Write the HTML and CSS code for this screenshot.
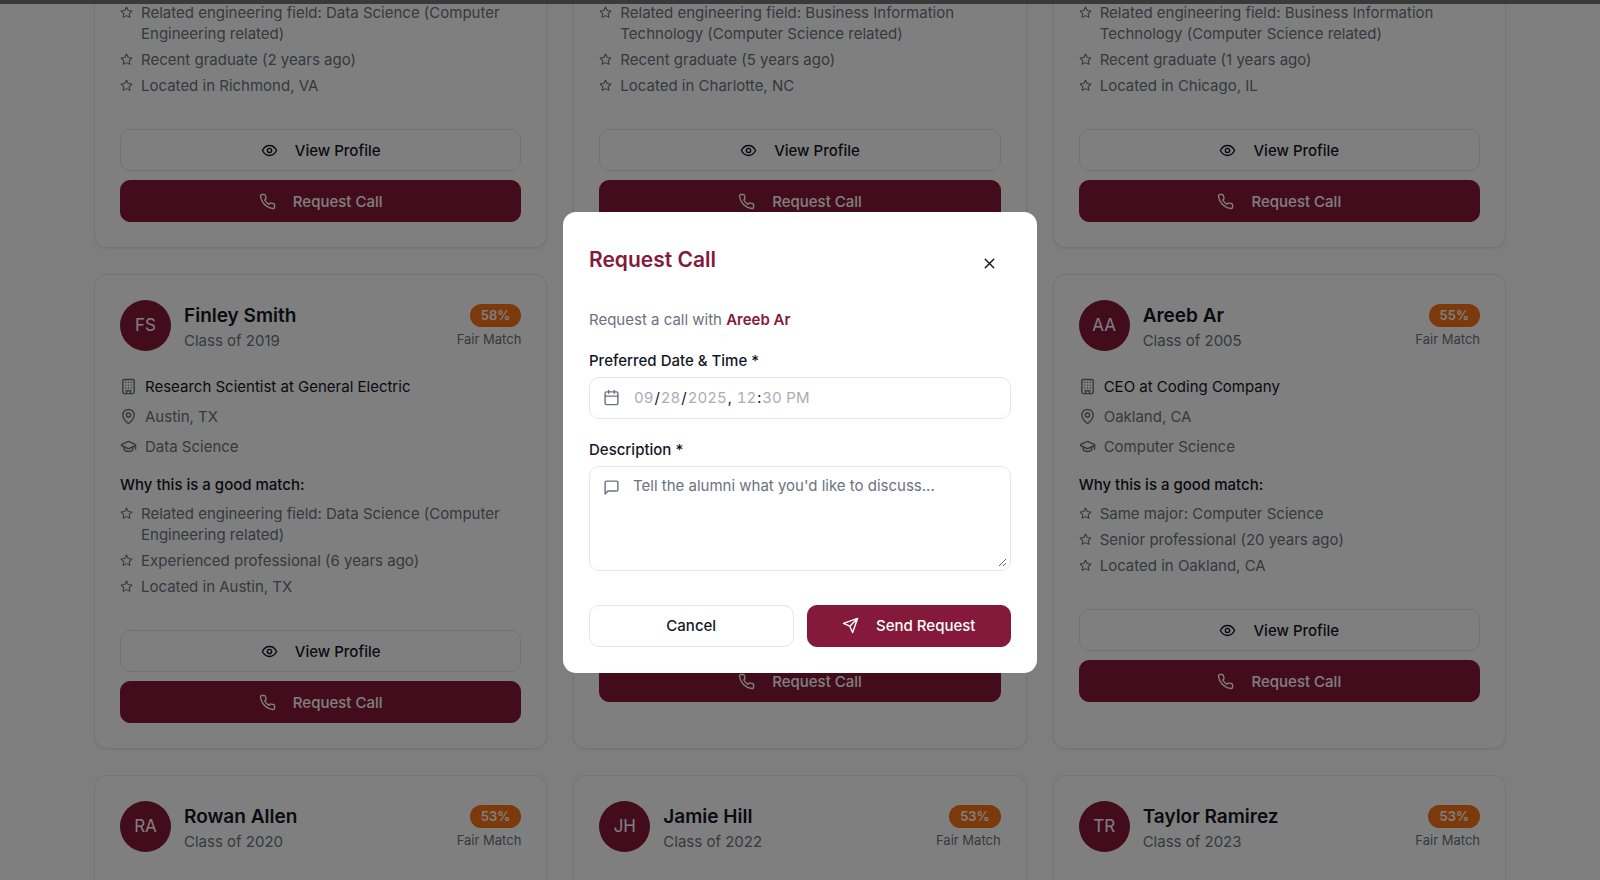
FILE: index.html
```
<!DOCTYPE html>
<html lang="en">

<head>
    <meta charset="UTF-8">
    <meta name="viewport" content="width=device-width, initial-scale=1.0">
    <title>Alumni Matches</title>
    <link rel="stylesheet" href="styles.css">
</head>

<body>
    <!-- icon set -->
    <svg class="sprite" aria-hidden="true">
        <symbol id="star" viewBox="0 0 24 24">
            <path d="M12 2l3.1 6.3 6.9 1-5 4.9 1.2 6.8-6.2-3.2L5.800 21 7 14.200 2 9.300l6.900-1z" />
        </symbol>
        <symbol id="eye" viewBox="0 0 24 24">
            <path d="M2 12s3.500-7 10-7 10 7 10 7-3.500 7-10 7-10-7-10-7z" />
            <circle cx="12" cy="12" r="3" />
        </symbol>
        <symbol id="phone" viewBox="0 0 24 24">
            <path d="M22 16.920v3a2 2 0 0 1-2.180 2 19.790 19.790 0 0 1-8.630-3.070 19.500 19.500 0 0 1-6-6 19.790 19.790 0 0 1-3.070-8.670A2 2 0 0 1 4.110 2h3a2 2 0 0 1 2 1.720 12.840 12.840 0 0 0 .7 2.810 2 2 0 0 1-.45 2.110L8.090 9.910a16 16 0 0 0 6 6l1.270-1.270a2 2 0 0 1 2.110-.45 12.840 12.840 0 0 0 2.810.7A2 2 0 0 1 22 16.920z" />
        </symbol>
        <symbol id="building" viewBox="0 0 24 24">
            <rect x="4" y="2" width="16" height="20" rx="2" />
            <path d="M9 22v-4h6v4M8 6h.01M16 6h.01M12 6h.01M12 10h.01M12 14h.01M16 10h.01M16 14h.01M8 10h.01M8 14h.01" />
        </symbol>
        <symbol id="pin" viewBox="0 0 24 24">
            <path d="M20 10c0 6-8 12-8 12s-8-6-8-12a8 8 0 0 1 16 0z" />
            <circle cx="12" cy="10" r="3" />
        </symbol>
        <symbol id="cap" viewBox="0 0 24 24">
            <path d="M21.420 10.920a1 1 0 0 0-.02-1.840L12.830 5.180a2 2 0 0 0-1.660 0L2.600 9.080a1 1 0 0 0 0 1.830l8.570 3.910a2 2 0 0 0 1.660 0z" />
            <path d="M22 10v6M6 12.500V16a6 3 0 0 0 12 0v-3.500" />
        </symbol>
        <symbol id="calendar" viewBox="0 0 24 24">
            <rect x="3" y="4" width="18" height="18" rx="2" />
            <path d="M16 2v4M8 2v4M3 10h18" />
        </symbol>
        <symbol id="message" viewBox="0 0 24 24">
            <path d="M21 15a2 2 0 0 1-2 2H7l-4 4V5a2 2 0 0 1 2-2h14a2 2 0 0 1 2 2z" />
        </symbol>
        <symbol id="send" viewBox="0 0 24 24">
            <path d="M22 2L15 22l-4-9-9-4zM22 2L11 13" />
        </symbol>
        <symbol id="close" viewBox="0 0 24 24">
            <path d="M18 6L6 18M6 6l12 12" />
        </symbol>
    </svg>

    <div class="topbar"></div>

    <main class="cards">
        <article class="card card-scrolled">
            <ul class="reasons">
                <li><svg class="icon icon-sm"><use href="#star" /></svg><span>Related engineering field: Data Science (Computer Engineering related)</span></li>
                <li><svg class="icon icon-sm"><use href="#star" /></svg><span>Recent graduate (2 years ago)</span></li>
                <li><svg class="icon icon-sm"><use href="#star" /></svg><span>Located in Richmond, VA</span></li>
            </ul>
            <div class="actions">
                <button class="btn btn-outline"><svg class="icon"><use href="#eye" /></svg>View Profile</button>
                <button class="btn btn-primary"><svg class="icon"><use href="#phone" /></svg>Request Call</button>
            </div>
        </article>
        <article class="card card-scrolled">
            <ul class="reasons">
                <li><svg class="icon icon-sm"><use href="#star" /></svg><span>Related engineering field: Business Information Technology (Computer Science related)</span></li>
                <li><svg class="icon icon-sm"><use href="#star" /></svg><span>Recent graduate (5 years ago)</span></li>
                <li><svg class="icon icon-sm"><use href="#star" /></svg><span>Located in Charlotte, NC</span></li>
            </ul>
            <div class="actions">
                <button class="btn btn-outline"><svg class="icon"><use href="#eye" /></svg>View Profile</button>
                <button class="btn btn-primary"><svg class="icon"><use href="#phone" /></svg>Request Call</button>
            </div>
        </article>
        <article class="card card-scrolled">
            <ul class="reasons">
                <li><svg class="icon icon-sm"><use href="#star" /></svg><span>Related engineering field: Business Information Technology (Computer Science related)</span></li>
                <li><svg class="icon icon-sm"><use href="#star" /></svg><span>Recent graduate (1 years ago)</span></li>
                <li><svg class="icon icon-sm"><use href="#star" /></svg><span>Located in Chicago, IL</span></li>
            </ul>
            <div class="actions">
                <button class="btn btn-outline"><svg class="icon"><use href="#eye" /></svg>View Profile</button>
                <button class="btn btn-primary"><svg class="icon"><use href="#phone" /></svg>Request Call</button>
            </div>
        </article>

        <article class="card">
            <header class="card-header">
                <div class="avatar">FS</div>
                <div class="person">
                    <h3>Finley Smith</h3>
                    <p>Class of 2019</p>
                </div>
                <div class="score">
                    <span class="badge">58%</span>
                    <span class="match">Fair Match</span>
                </div>
            </header>
            <ul class="details">
                <li class="job"><svg class="icon"><use href="#building" /></svg>Research Scientist at General Electric</li>
                <li><svg class="icon"><use href="#pin" /></svg>Austin, TX</li>
                <li><svg class="icon"><use href="#cap" /></svg>Data Science</li>
            </ul>
            <h4>Why this is a good match:</h4>
            <ul class="reasons">
                <li><svg class="icon icon-sm"><use href="#star" /></svg><span>Related engineering field: Data Science (Computer Engineering related)</span></li>
                <li><svg class="icon icon-sm"><use href="#star" /></svg><span>Experienced professional (6 years ago)</span></li>
                <li><svg class="icon icon-sm"><use href="#star" /></svg><span>Located in Austin, TX</span></li>
            </ul>
            <div class="actions">
                <button class="btn btn-outline"><svg class="icon"><use href="#eye" /></svg>View Profile</button>
                <button class="btn btn-primary"><svg class="icon"><use href="#phone" /></svg>Request Call</button>
            </div>
        </article>
        <article class="card card-behind">
            <div class="actions">
                <button class="btn btn-primary"><svg class="icon"><use href="#phone" /></svg>Request Call</button>
            </div>
        </article>
        <article class="card">
            <header class="card-header">
                <div class="avatar">AA</div>
                <div class="person">
                    <h3>Areeb Ar</h3>
                    <p>Class of 2005</p>
                </div>
                <div class="score">
                    <span class="badge">55%</span>
                    <span class="match">Fair Match</span>
                </div>
            </header>
            <ul class="details">
                <li class="job"><svg class="icon"><use href="#building" /></svg>CEO at Coding Company</li>
                <li><svg class="icon"><use href="#pin" /></svg>Oakland, CA</li>
                <li><svg class="icon"><use href="#cap" /></svg>Computer Science</li>
            </ul>
            <h4>Why this is a good match:</h4>
            <ul class="reasons">
                <li><svg class="icon icon-sm"><use href="#star" /></svg><span>Same major: Computer Science</span></li>
                <li><svg class="icon icon-sm"><use href="#star" /></svg><span>Senior professional (20 years ago)</span></li>
                <li><svg class="icon icon-sm"><use href="#star" /></svg><span>Located in Oakland, CA</span></li>
            </ul>
            <div class="actions">
                <button class="btn btn-outline"><svg class="icon"><use href="#eye" /></svg>View Profile</button>
                <button class="btn btn-primary"><svg class="icon"><use href="#phone" /></svg>Request Call</button>
            </div>
        </article>

        <article class="card card-last">
            <header class="card-header">
                <div class="avatar">RA</div>
                <div class="person">
                    <h3>Rowan Allen</h3>
                    <p>Class of 2020</p>
                </div>
                <div class="score">
                    <span class="badge">53%</span>
                    <span class="match">Fair Match</span>
                </div>
            </header>
        </article>
        <article class="card card-last">
            <header class="card-header">
                <div class="avatar">JH</div>
                <div class="person">
                    <h3>Jamie Hill</h3>
                    <p>Class of 2022</p>
                </div>
                <div class="score">
                    <span class="badge">53%</span>
                    <span class="match">Fair Match</span>
                </div>
            </header>
        </article>
        <article class="card card-last">
            <header class="card-header">
                <div class="avatar">TR</div>
                <div class="person">
                    <h3>Taylor Ramirez</h3>
                    <p>Class of 2023</p>
                </div>
                <div class="score">
                    <span class="badge">53%</span>
                    <span class="match">Fair Match</span>
                </div>
            </header>
        </article>
    </main>

    <div class="overlay">
        <form class="modal" role="dialog" aria-labelledby="modal-title">
            <div class="modal-header">
                <h2 id="modal-title">Request Call</h2>
                <button type="button" class="close" aria-label="Close"><svg class="icon"><use href="#close" /></svg></button>
            </div>
            <p class="intro">Request a call with <strong>Areeb Ar</strong></p>

            <label for="datetime">Preferred Date &amp; Time *</label>
            <div class="field">
                <svg class="icon"><use href="#calendar" /></svg>
                <input type="datetime-local" id="datetime" value="2025-09-28T12:30">
            </div>

            <label for="description">Description *</label>
            <div class="field field-area">
                <svg class="icon"><use href="#message" /></svg>
                <textarea id="description" placeholder="Tell the alumni what you'd like to discuss..."></textarea>
            </div>

            <div class="modal-actions">
                <button type="button" class="btn btn-outline">Cancel</button>
                <button type="button" class="btn btn-primary"><svg class="icon"><use href="#send" /></svg>Send Request</button>
            </div>
        </form>
    </div>
</body>

</html>
```
FILE: styles.css
```
* {
    box-sizing: border-box;
    margin: 0;
    padding: 0;
}

body {
    height: 100vh;
    overflow: hidden;
    background: #fcfcfc;
    color: #14171f;
    font-family: Inter, "Liberation Sans", sans-serif;
    font-size: 15px;
    line-height: 21px;
}

ul {
    list-style: none;
}

button,
input,
textarea {
    font: inherit;
    color: inherit;
}

.sprite {
    display: none;
}

.icon {
    width: 17px;
    height: 17px;
    flex-shrink: 0;
    fill: none;
    stroke: currentColor;
    stroke-width: 2;
    stroke-linecap: round;
    stroke-linejoin: round;
}

.icon-sm {
    width: 13px;
    height: 13px;
    margin-top: 4px;
}

.topbar {
    position: fixed;
    top: 0;
    left: 0;
    right: 0;
    z-index: 2;
    height: 4px;
    background: #3a3a3a;
}

/* cards */
.cards {
    display: grid;
    grid-template-columns: repeat(3, 1fr);
    gap: 26px;
    padding: 2px 94px 0;
}

.card {
    padding: 25px;
    border: 1px solid #e6e8f0;
    border-radius: 13px;
    background: #fff;
    box-shadow: 0 1px 2px rgba(0, 0, 0, 0.06);
}

/* first row is scrolled under the top bar */
.card-scrolled {
    padding-top: 0;
    border-top: none;
    border-top-left-radius: 0;
    border-top-right-radius: 0;
}

.card-behind {
    display: flex;
    flex-direction: column;
    justify-content: flex-end;
    padding-bottom: 46px;
}

.card-last {
    padding-bottom: 60px;
}

.card-header {
    display: flex;
    align-items: center;
    gap: 13px;
    margin-bottom: 25px;
}

.avatar {
    display: flex;
    align-items: center;
    justify-content: center;
    width: 51px;
    height: 51px;
    border-radius: 50%;
    background: #84193b;
    color: #fff;
    font-size: 17px;
}

.person {
    flex: 1;
    color: #6b7280;
}

.person h3 {
    color: #14171f;
    font-size: 19px;
    font-weight: 600;
    line-height: 29px;
}

.score {
    display: flex;
    flex-direction: column;
    align-items: flex-end;
    gap: 4px;
    font-size: 13px;
}

.badge {
    padding: 1px 11px;
    border-radius: 12px;
    background: #f97316;
    color: #fff;
    font-weight: 600;
}

.match {
    color: #6b7280;
    line-height: 17px;
}

.details {
    display: flex;
    flex-direction: column;
    gap: 9px;
    margin-bottom: 17px;
    color: #6b7280;
}

.details li {
    display: flex;
    align-items: center;
    gap: 8px;
}

.job {
    color: #14171f;
}

.job .icon {
    color: #6b7280;
}

.card h4 {
    margin-bottom: 8px;
    font-size: 15px;
    font-weight: 500;
}

.reasons {
    display: flex;
    flex-direction: column;
    gap: 5px;
    margin-bottom: 33px;
    color: #6b7280;
}

.reasons li {
    display: flex;
    gap: 8px;
}

.actions {
    display: flex;
    flex-direction: column;
    gap: 9px;
}

/* buttons */
.btn {
    display: flex;
    align-items: center;
    justify-content: center;
    gap: 17px;
    height: 42px;
    border: 1px solid #e4e5e9;
    border-radius: 10px;
    background: #fff;
    font-weight: 500;
    cursor: pointer;
}

.btn-primary {
    border-color: #84193b;
    background: #84193b;
    color: #fff;
}

/* modal */
.overlay {
    position: fixed;
    inset: 4px 0 0;
    display: flex;
    align-items: center;
    justify-content: center;
    background: rgba(0, 0, 0, 0.5);
}

.modal {
    width: 474px;
    padding: 26px;
    border-radius: 13px;
    background: #fff;
}

.modal-header {
    display: flex;
    align-items: flex-start;
    justify-content: space-between;
    margin-bottom: 28px;
}

.modal h2 {
    color: #84193b;
    font-size: 21px;
    font-weight: 600;
    line-height: 43px;
}

.close {
    display: flex;
    padding: 17px 13px 9px;
    border: none;
    background: none;
    cursor: pointer;
}

.intro {
    margin-bottom: 20px;
    color: #6b7280;
}

.intro strong {
    color: #84193b;
    font-weight: 600;
}

.modal label {
    display: block;
    margin-bottom: 6px;
    font-weight: 500;
}

.field {
    display: flex;
    align-items: center;
    gap: 13px;
    height: 42px;
    margin-bottom: 20px;
    padding-left: 13px;
    border: 1px solid #e4e5e9;
    border-radius: 10px;
    color: #6b7280;
}

.field input,
.field textarea {
    flex: 1;
    min-width: 0;
    border: none;
    outline: none;
    background: none;
    color: #14171f;
}

.field input {
    font-variant-numeric: tabular-nums;
}

.field input::-webkit-calendar-picker-indicator {
    display: none;
}

.field input::-webkit-datetime-edit-month-field,
.field input::-webkit-datetime-edit-day-field,
.field input::-webkit-datetime-edit-year-field,
.field input::-webkit-datetime-edit-hour-field,
.field input::-webkit-datetime-edit-minute-field,
.field input::-webkit-datetime-edit-ampm-field {
    color: #a9adb8;
}

.field-area {
    align-items: stretch;
    height: auto;
    margin-bottom: 34px;
    padding-right: 3px;
    padding-bottom: 3px;
}

.field-area .icon {
    margin-top: 12px;
}

.field textarea {
    height: 100px;
    padding-top: 8px;
    resize: vertical;
}

.field textarea::placeholder {
    color: #6b7280;
}

.modal-actions {
    display: flex;
    gap: 13px;
}

.modal-actions .btn {
    flex: 1;
}
```
